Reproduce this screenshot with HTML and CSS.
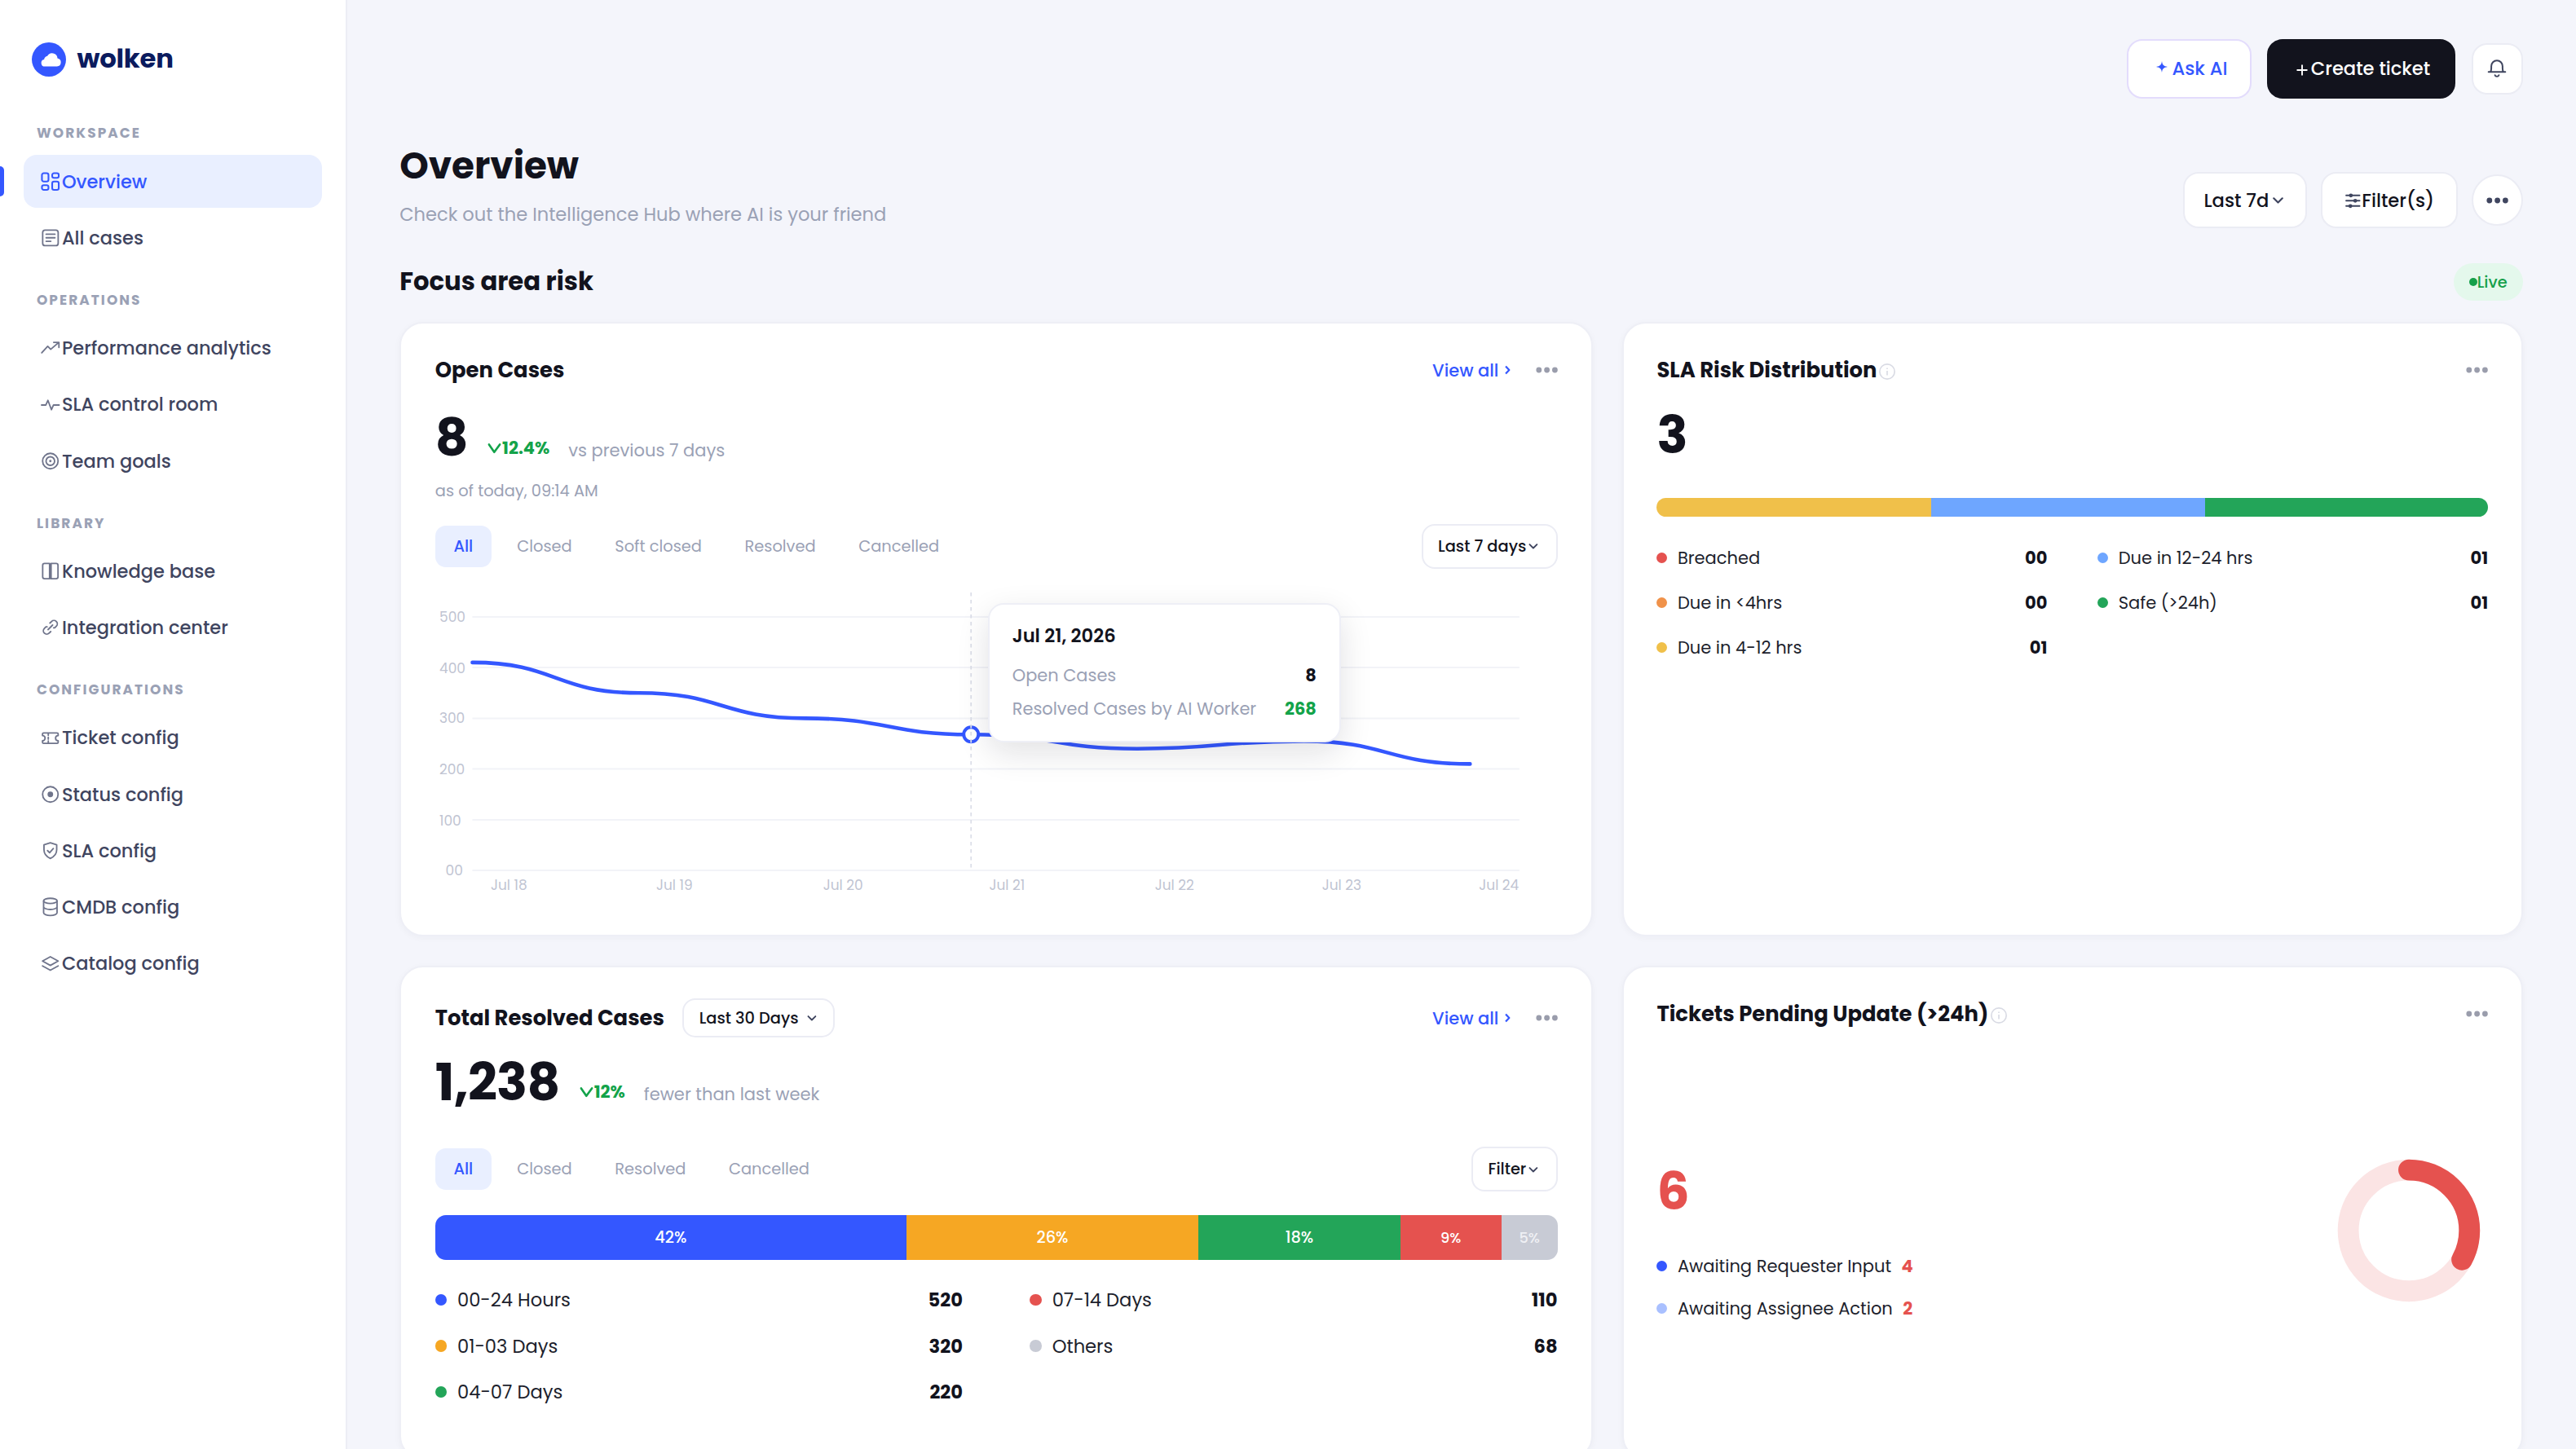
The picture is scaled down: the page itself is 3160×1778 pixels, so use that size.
FILE: index.html
```html
<!DOCTYPE html>
<html lang="en">
<head>
<meta charset="utf-8">
<title>Wolken – Overview</title>
<link rel="stylesheet" href="styles.css">
</head>
<body>
<svg class="sprite" aria-hidden="true">
  <symbol id="chevron" viewBox="0 0 24 24"><path d="M6 9.5l6 6 6-6"/></symbol>
  <symbol id="chevron-right" viewBox="0 0 24 24"><path d="M9.500 6.200l5.800 6-5.800 6"/></symbol>
  <symbol id="dots" viewBox="0 0 27 10"><circle cx="3.8" cy="5" r="3.4"/><circle cx="13.6" cy="5" r="3.4"/><circle cx="23.4" cy="5" r="3.4"/></symbol>
  <symbol id="info" viewBox="0 0 24 24"><circle cx="12" cy="12" r="10"/><path d="M12 11v6M12 7v1.6"/></symbol>
  <symbol id="down" viewBox="0 0 18 18"><path d="M2.4 4.4l6.4 9.4 6.8-9.4"/></symbol>
</svg>
<div class="app">
  <aside class="sidebar">
    <div class="brand">
      <svg class="brand-mark" viewBox="0 0 42 42"><circle cx="21" cy="21" r="21"/><path d="M16 29.6a4.4 4.4 0 0 1-.9-8.7 5.2 5.2 0 0 1 4-4.1 6.6 6.6 0 0 1 12.4 2.7 5.1 5.1 0 0 1-.6 10.1z"/></svg>
      <span class="brand-name">wolken</span>
    </div>
    <nav class="nav">
      <h2 class="nav-label">WORKSPACE</h2>
      <a class="nav-item active"><svg viewBox="0 0 24 24"><rect x="3" y="3" width="7" height="9" rx="2"/><rect x="14" y="3" width="7" height="5" rx="2"/><rect x="14" y="12" width="7" height="9" rx="2"/><rect x="3" y="16" width="7" height="5" rx="2"/></svg>Overview</a>
      <a class="nav-item"><svg viewBox="0 0 24 24"><rect x="3.8" y="3.8" width="16.6" height="16.6" rx="2.6"/><path d="M7.5 8.2h9.4M7.5 12h9.4M7.5 15.8h5"/></svg>All cases</a>
      <h2 class="nav-label">OPERATIONS</h2>
      <a class="nav-item"><svg viewBox="0 0 24 24"><path d="M2.8 17.4l6.4-7 3.2 3.2 8.4-7.2M15.6 6.2h5.6v5.4"/></svg>Performance analytics</a>
      <a class="nav-item"><svg viewBox="0 0 24 24"><path d="M2.6 12.2h4.6l2.2-5 3.8 10 2.2-5h6"/></svg>SLA control room</a>
      <a class="nav-item"><svg viewBox="0 0 24 24"><circle cx="12" cy="12" r="8.3"/><circle cx="12" cy="12" r="4.6"/><circle class="solid" cx="12" cy="12" r=".5"/></svg>Team goals</a>
      <h2 class="nav-label">LIBRARY</h2>
      <a class="nav-item"><svg viewBox="0 0 24 24"><path d="M11.2 3.8H5.8a2 2 0 0 0-2 2v12.4a2 2 0 0 0 2 2h5.4zM12.8 3.8h5.4a2 2 0 0 1 2 2v12.4a2 2 0 0 1-2 2h-5.4z"/></svg>Knowledge base</a>
      <a class="nav-item"><svg viewBox="0 0 24 24"><path d="M9.6 14.4l4.8-4.8M11.6 7.4l1.7-1.7a3.6 3.6 0 0 1 5.1 5.1l-1.7 1.7h-1.2M12.4 16.6l-1.7 1.7a3.6 3.6 0 0 1-5.1-5.1l1.7-1.7h1.2"/></svg>Integration center</a>
      <h2 class="nav-label">CONFIGURATIONS</h2>
      <a class="nav-item"><svg viewBox="0 0 24 24"><path d="M3.6 9.2V7.6a1.2 1.2 0 0 1 1.2-1.2h14.4a1.2 1.2 0 0 1 1.2 1.2v1.6a2.8 2.8 0 0 0 0 5.6v1.6a1.2 1.2 0 0 1-1.2 1.2H4.8a1.2 1.2 0 0 1-1.2-1.2v-1.6a2.8 2.8 0 0 0 0-5.6z"/><path d="M9.8 7v2M9.8 11v2M9.8 15v2"/></svg>Ticket config</a>
      <a class="nav-item"><svg viewBox="0 0 24 24"><circle cx="12" cy="12" r="8.3"/><circle class="solid" cx="12" cy="12" r="2.2"/></svg>Status config</a>
      <a class="nav-item"><svg viewBox="0 0 24 24"><path d="M12 3.6l6.8 2.2v5.4c0 4.4-2.7 7.4-6.8 9.2-4.1-1.8-6.8-4.8-6.8-9.2V5.8zM9 12l2.2 2.2 4-4.4"/></svg>SLA config</a>
      <a class="nav-item"><svg viewBox="0 0 24 24"><ellipse cx="12" cy="5.6" rx="7.2" ry="2.8"/><path d="M4.8 5.6v12.8c0 1.5 3.2 2.8 7.2 2.8s7.2-1.3 7.2-2.8V5.6M4.8 12c0 1.5 3.2 2.8 7.2 2.8s7.2-1.3 7.2-2.8"/></svg>CMDB config</a>
      <a class="nav-item"><svg viewBox="0 0 24 24"><path d="M12 4.4l8.4 4.6-8.4 4.6-8.4-4.6zM3.6 14.2l8.4 4.6 8.4-4.6"/></svg>Catalog config</a>
    </nav>
  </aside>

  <main class="main">
    <header class="topbar">
      <button class="btn btn-ask"><svg viewBox="0 0 14 14"><path d="M7 0c.7 4.6 1.8 6 7 7-5.2 1-6.3 2.4-7 7-.7-4.6-1.8-6-7-7 5.2-1 6.3-2.4 7-7z"/></svg>Ask AI</button>
      <button class="btn btn-create"><svg viewBox="0 0 14 14"><path d="M7 .5v13M.5 7h13"/></svg>Create ticket</button>
      <button class="btn btn-icon"><svg class="bell" viewBox="0 0 24 24"><path d="M1.7 16.3h20.6M4 16.3c1-1.4 1.1-2.6 1.1-4.6V9.2a6.9 6.9 0 0 1 13.8 0v2.5c0 2 .1 3.2 1.1 4.6M9.6 20.2a2.5 2.2 0 0 0 4.8 0"/></svg></button>
    </header>

    <section class="page-head">
      <div>
        <h1>Overview</h1>
        <p class="subtitle">Check out the Intelligence Hub where AI is your friend</p>
      </div>
      <div class="head-actions">
        <button class="btn btn-range">Last 7d<svg class="chev"><use href="#chevron"/></svg></button>
        <button class="btn btn-filter"><svg class="sliders" viewBox="0 0 22 22"><path d="M3 4.7h16M3 11h16M3 17.3h16"/><circle cx="8.6" cy="4.7" r="2.3"/><circle cx="13.8" cy="11" r="2.3"/><circle cx="8" cy="17.3" r="2.3"/></svg>Filter(s)</button>
        <button class="btn btn-icon btn-round"><svg class="dots"><use href="#dots"/></svg></button>
      </div>
    </section>

    <section class="section-head">
      <h2>Focus area risk</h2>
      <span class="live"><i></i>Live</span>
    </section>

    <div class="grid">
      <article class="card">
        <div class="card-head">
          <h3>Open Cases</h3>
          <a class="view-all">View all<svg><use href="#chevron-right"/></svg></a>
          <svg class="dots muted"><use href="#dots"/></svg>
        </div>
        <div class="metric metric-open">
          <span class="num">8</span>
          <span class="delta"><svg><use href="#down"/></svg>12.4%</span>
          <span class="delta-note">vs previous 7 days</span>
        </div>
        <p class="asof">as of today, 09:14 AM</p>
        <div class="tabs-row tabs-open">
          <div class="tabs"><span class="tab on">All</span><span class="tab">Closed</span><span class="tab">Soft closed</span><span class="tab">Resolved</span><span class="tab">Cancelled</span></div>
          <button class="select">Last 7 days<svg class="chev"><use href="#chevron"/></svg></button>
        </div>
        <div class="chart">
          <svg viewBox="0 0 1377 385">
            <g class="gridlines"><path d="M45.5 36.9H1330M45.5 99.1H1330M45.5 161.4H1330M45.5 223.6H1330M45.5 285.9H1330M45.5 348.1H1330"/></g>
            <g class="axis">
              <text x="5" y="43">500</text><text x="5" y="105.5">400</text><text x="5" y="167.5">300</text><text x="5" y="230">200</text><text x="5" y="292.6">100</text><text x="12.5" y="354.5">00</text>
              <text x="68" y="372">Jul 18</text><text x="271" y="372">Jul 19</text><text x="475.8" y="372">Jul 20</text><text x="679.5" y="372">Jul 21</text><text x="882.8" y="372">Jul 22</text><text x="1087.8" y="372">Jul 23</text><text x="1280.5" y="372">Jul 24</text>
            </g>
            <path class="line" d="M45.5 92.9C147.500 92.9 147.5 130.2 249.5 130.2C351.5 130.2 351.5 161.4 453.5 161.4C555.5 161.4 555.5 181.3 657.3 181.3C759 181.3 759 198.7 861 198.7C963 198.7 963 189.4 1065.5 189.4C1167.5 189.4 1167.5 217.4 1269.500 217.4"/>
            <circle class="marker" cx="657.3" cy="181.3" r="9"/>
            <path class="cursor" d="M657.3 7V348.1"/>
          </svg>
          <div class="tooltip">
            <h4>Jul 21, 2026</h4>
            <div class="tip-row"><span>Open Cases</span><b>8</b></div>
            <div class="tip-row"><span>Resolved Cases by AI Worker</span><b class="good">268</b></div>
          </div>
        </div>
      </article>

      <article class="card card-side">
        <div class="card-head">
          <h3>SLA Risk Distribution</h3><svg class="info"><use href="#info"/></svg>
          <svg class="dots muted push"><use href="#dots"/></svg>
        </div>
        <div class="metric metric-sla"><span class="num">3</span></div>
        <div class="bar bar-sla"><span class="c-yellow" style="width:33%"></span><span class="c-sky" style="width:33%"></span><span class="c-green" style="width:34%"></span></div>
        <div class="legend legend-sla">
          <div class="row"><i class="c-red"></i>Breached<b>00</b></div>
          <div class="row"><i class="c-orange"></i>Due in &lt;4hrs<b>00</b></div>
          <div class="row"><i class="c-yellow"></i>Due in 4-12 hrs<b>01</b></div>
          <div class="row"><i class="c-sky"></i>Due in 12-24 hrs<b>01</b></div>
          <div class="row"><i class="c-green"></i>Safe (&gt;24h)<b>01</b></div>
        </div>
      </article>

      <article class="card">
        <div class="card-head">
          <h3>Total Resolved Cases</h3>
          <button class="select select-sm">Last 30 Days<svg class="chev"><use href="#chevron"/></svg></button>
          <a class="view-all">View all<svg><use href="#chevron-right"/></svg></a>
          <svg class="dots muted"><use href="#dots"/></svg>
        </div>
        <div class="metric metric-resolved">
          <span class="num">1,238</span>
          <span class="delta"><svg><use href="#down"/></svg>12%</span>
          <span class="delta-note">fewer than last week</span>
        </div>
        <div class="tabs-row tabs-resolved">
          <div class="tabs"><span class="tab on">All</span><span class="tab">Closed</span><span class="tab">Resolved</span><span class="tab">Cancelled</span></div>
          <button class="select">Filter<svg class="chev"><use href="#chevron"/></svg></button>
        </div>
        <div class="bar bar-resolved"><span class="c-blue" style="width:42%">42%</span><span class="c-amber" style="width:26%">26%</span><span class="c-green" style="width:18%">18%</span><span class="c-red small" style="width:9%">9%</span><span class="c-gray small" style="width:5%">5%</span></div>
        <div class="legend legend-resolved">
          <div class="row"><i class="c-blue"></i>00-24 Hours<b>520</b></div>
          <div class="row"><i class="c-amber"></i>01-03 Days<b>320</b></div>
          <div class="row"><i class="c-green"></i>04-07 Days<b>220</b></div>
          <div class="row"><i class="c-red"></i>07-14 Days<b>110</b></div>
          <div class="row"><i class="c-gray"></i>Others<b>68</b></div>
        </div>
      </article>

      <article class="card card-side">
        <div class="card-head">
          <h3>Tickets Pending Update (&gt;24h)</h3><svg class="info"><use href="#info"/></svg>
          <svg class="dots muted push"><use href="#dots"/></svg>
        </div>
        <div class="pending">
          <div class="pending-info">
            <span class="num alert">6</span>
            <div class="pending-row"><i class="c-blue"></i>Awaiting Requester Input<b>4</b></div>
            <div class="pending-row"><i class="c-lightblue"></i>Awaiting Assignee Action<b>2</b></div>
          </div>
          <svg class="donut" viewBox="0 0 120 120"><circle class="track" cx="60" cy="60" r="46"/><circle class="value" cx="60" cy="60" r="46" pathLength="100" stroke-dasharray="33 100" transform="rotate(-90 60 60)"/></svg>
        </div>
      </article>
    </div>
  </main>
</div>
</body>
</html>
```
FILE: styles.css
```css
* { box-sizing: border-box; margin: 0; padding: 0; }
html, body { height: 100%; overflow: hidden; }
body {
  font-family: Poppins, Inter, sans-serif;
  font-size: 22.62px;
  color: #12131d;
  background: #f4f5fb;
}
button { font: inherit; color: inherit; }
i { display: block; flex: none; border-radius: 50%; }
.sprite { display: none; }
.app { display: flex; height: 1778px; overflow: hidden; }

/* Sidebar */
.sidebar {
  flex: none;
  width: 426px;
  padding: 51.5px 29px 0;
  background: #fff;
  border-right: 2px solid #ecedf5;
}
.brand { display: flex; align-items: center; gap: 13.6px; height: 42px; padding-left: 9.8px; }
.brand-mark { width: 42px; height: 42px; fill: #3457ff; }
.brand-mark path { fill: #fff; }
.brand-name { font-size: 32.3px; font-weight: 700; letter-spacing: -.2px; line-height: 40px; color: #0b1b5e; margin-top: -2px; }
.nav { padding-top: 26.6px; }
.nav-label {
  height: 26px;
  margin: 30.4px 0 13.6px 16px;
  font-size: 16.97px;
  font-weight: 700;
  line-height: 26px;
  letter-spacing: .12em;
  color: #9aa1b5;
}
.nav-item {
  position: relative;
  display: flex;
  align-items: center;
  height: 65.25px;
  padding-left: 19.4px;
  border-radius: 16px;
  font-size: 22.5px;
  font-weight: 500;
  line-height: 34px;
  color: #3f455f;
}
.nav-item + .nav-item { margin-top: 4px; }
.nav-item svg {
  width: 27.5px;
  height: 27.5px;
  fill: none;
  stroke: #6f748b;
  stroke-width: 1.6;
  stroke-linecap: round;
  stroke-linejoin: round;
}
.nav-item .solid { fill: #6f748b; }
.nav-item.active { background: #e9efff; color: #3457ff; }
.nav-item.active svg { stroke: #3457ff; stroke-width: 1.8; }
.nav-item.active::before {
  content: "";
  position: absolute;
  left: -29px;
  top: 14px;
  width: 5px;
  height: 37px;
  border-radius: 0 5px 5px 0;
  background: #3457ff;
}

/* Page header */
.main { flex: 1; min-width: 0; padding: 48px 65px 0 64.2px; }
.btn {
  display: flex;
  align-items: center;
  flex: none;
  background: #fff;
  border: 2px solid #ebecf4;
  border-radius: 19px;
  font-weight: 500;
  white-space: nowrap;
}
.topbar { display: flex; justify-content: flex-end; align-items: center; gap: 19.4px; height: 73px; }
.btn-ask, .btn-create { height: 73px; padding-bottom: 1.5px; }
.btn-ask { width: 153px; padding-left: 34.6px; gap: 5px; color: #3457ff; border-color: #e3dcfc; }
.btn-ask svg { width: 14px; height: 14px; margin-top: -4px; fill: currentColor; }
.btn-create { width: 231px; padding-left: 33.5px; gap: 4px; color: #fff; background: #12131d; border-color: #12131d; }
.btn-create svg { width: 14px; height: 14px; margin-top: 4px; fill: none; stroke: #fff; stroke-width: 1.9; }
.btn-icon { width: 63.4px; height: 63.4px; justify-content: center; }
.btn-round { border-radius: 50%; }
.bell { width: 24px; height: 24px; fill: none; stroke: #3f455f; stroke-width: 2; stroke-linecap: round; stroke-linejoin: round; }
.dots { width: 27px; height: 10px; flex: none; fill: #3f455f; }
.dots.muted { fill: #9a9dac; }

.page-head { display: flex; justify-content: space-between; align-items: flex-end; height: 112.3px; margin-top: 47px; }
h1 { font-size: 45.25px; font-weight: 700; line-height: 70px; color: #12131d; }
.subtitle { margin-top: 8px; font-size: 22.57px; line-height: 34px; color: #9aa1b5; }
.head-actions { display: flex; align-items: center; gap: 17px; }
.btn-range, .btn-filter { height: 69px; }
.btn-range { width: 152.6px; padding-left: 24px; }
.btn-range .chev { width: 21px; height: 21px; margin-left: 1px; }
.btn-filter { width: 167.5px; padding-left: 25.6px; }
.sliders { width: 22.6px; height: 22.6px; fill: #3f455f; stroke: #3f455f; stroke-width: 1.9; stroke-linecap: round; }
.sliders circle { stroke: none; }
.chev { width: 17.8px; height: 17.8px; flex: none; fill: none; stroke: #3f455f; stroke-width: 2.5; stroke-linecap: round; stroke-linejoin: round; }

.section-head { display: flex; justify-content: space-between; align-items: center; height: 46px; margin-top: 43.2px; }
.section-head h2 { font-size: 30.7px; font-weight: 700; line-height: 46px; margin-top: -1px; }
.live {
  display: flex;
  align-items: center;
  height: 46px;
  padding: 0 19.4px 0 18.6px;
  border-radius: 23px;
  background: #e4f8ec;
  color: #15a04a;
  font-size: 19.4px;
  font-weight: 500;
}
.live i { width: 10px; height: 10px; background: #15a04a; }

/* Cards */
.grid {
  display: grid;
  grid-template-columns: 1464px 1fr;
  grid-template-rows: 754.3px 606px;
  gap: 35.5px;
  margin-top: 25.5px;
}
.card {
  min-width: 0;
  padding: 38.4px 41.6px;
  background: #fff;
  border: 2px solid #eeeff6;
  border-radius: 29px;
  box-shadow: 0 2px 8px rgba(20, 22, 60, .035);
}
.card-side { padding-left: 40.8px; padding-right: 40.8px; }
.card-head { display: flex; align-items: center; min-height: 38px; }
.card-head h3 { font-size: 25.84px; font-weight: 700; line-height: 38px; margin-top: -1px; }
.view-all { display: flex; align-items: center; margin-left: auto; margin-right: 25.5px; font-size: 21px; font-weight: 500; color: #3457ff; }
.view-all svg { width: 17.8px; height: 17.8px; margin-left: 2px; fill: none; stroke: currentColor; stroke-width: 3; stroke-linejoin: round; }
.push { margin-left: auto; }
.info { width: 22px; height: 22px; margin: 3px 0 0 2px; fill: none; stroke: #d9dbe4; stroke-width: 1.8; }

.metric { display: flex; align-items: center; height: 74px; }
.metric-open { margin-top: 26.7px; }
.metric-sla { margin-top: 23.8px; }
.metric-resolved { margin-top: 17.8px; }
.num { display: block; font-size: 63px; font-weight: 700; line-height: 74px; letter-spacing: -.8px; }
.delta { display: flex; align-items: center; margin: 25px 0 0 23.2px; font-size: 21px; font-weight: 700; line-height: 28px; color: #13a34a; }
.delta svg { width: 19px; height: 18px; fill: none; stroke: currentColor; stroke-width: 2.6; stroke-linecap: round; stroke-linejoin: round; }
.delta-note { margin: 31.5px 0 0 22.9px; font-size: 21px; line-height: 28px; color: #9aa1b5; }
.asof { margin-top: 13.7px; font-size: 19.4px; line-height: 30px; color: #9aa1b5; }

.tabs-row { display: flex; justify-content: space-between; align-items: center; height: 54.4px; }
.tabs-open { margin-top: 25.4px; }
.tabs-resolved { margin-top: 42.7px; }
.tabs { display: flex; gap: 7.4px; }
.tab { padding: 0 22.6px; border-radius: 13px; font-size: 19.4px; line-height: 51.6px; color: #9aa1b5; }
.tab.on { margin-right: 1.6px; font-weight: 500; background: #e9efff; color: #3457ff; }
.select {
  display: flex;
  align-items: center;
  height: 54.4px;
  padding: 0 18.5px;
  background: #fff;
  border: 2px solid #ebecf4;
  border-radius: 16px;
  font-size: 19.4px;
  font-weight: 500;
  white-space: nowrap;
}
.select-sm { height: 47.7px; margin-left: 22.3px; padding-right: 17.6px; gap: 7.5px; }

/* Line chart */
.chart { position: relative; height: 385px; margin-top: 22.2px; }
.chart svg { display: block; width: 100%; height: 385px; }
.gridlines path { fill: none; stroke: #f2f3f8; stroke-width: 2; }
.axis text { font-size: 16.97px; fill: #c0c4d2; }
.line { fill: none; stroke: #3457ff; stroke-width: 4.6; stroke-linecap: round; }
.marker { fill: #fff; stroke: #3457ff; stroke-width: 4; }
.cursor { fill: none; stroke: #dcdee8; stroke-width: 1.8; stroke-dasharray: 4.5 4.5; }
.tooltip {
  position: absolute;
  left: 678px;
  top: 20.2px;
  width: 433px;
  height: 171px;
  padding: 22.2px 28px;
  background: #fff;
  border: 2px solid #eeeff6;
  border-radius: 19.4px;
  box-shadow: 0 13px 39px rgba(18, 19, 29, .12);
}
.tooltip h4 { font-size: 22.62px; font-weight: 600; line-height: 32px; }
.tip-row { display: flex; justify-content: space-between; height: 32px; font-size: 20.9px; line-height: 32px; color: #9aa1b5; margin-top: 8.5px; }
h4 + .tip-row { margin-top: 17.4px; }
.tip-row b { color: #12131d; }
.tip-row b.good { color: #13a34a; }

/* Stacked bars and legends */
.bar { display: flex; overflow: hidden; }
.bar span { display: block; height: 100%; text-align: center; color: #fff; }
.bar-sla { height: 23px; margin-top: 39.5px; border-radius: 12px; }
.bar-resolved { height: 55px; margin-top: 29.4px; border-radius: 13px; font-size: 19.4px; font-weight: 500; line-height: 55px; }
.bar-resolved .small { font-size: 17.78px; }
.bar-resolved .c-gray { color: #eff0f4; }
.legend { display: grid; grid-auto-flow: column; grid-template-columns: 1fr 1fr; }
.legend-sla { grid-template-rows: repeat(3, 32px); gap: 23px 62px; margin-top: 35px; font-size: 21px; }
.legend-resolved { grid-template-rows: repeat(3, 34px); gap: 22.6px 82.5px; margin-top: 31.8px; }
.row { display: flex; align-items: center; color: #1d1f2d; }
.row b { margin-left: auto; color: #12131d; }
.legend-sla i { width: 13px; height: 13px; margin-right: 12.4px; }
.legend-resolved i { width: 14.5px; height: 14.5px; margin-right: 12.7px; }
.c-blue { background: #3457ff; }
.c-lightblue { background: #a9c0ff; }
.c-sky { background: #6ea6ff; }
.c-green { background: #23a559; }
.c-yellow { background: #f0c04a; }
.c-amber { background: #f6a723; }
.c-orange { background: #f0924a; }
.c-red { background: #e5524f; }
.c-gray { background: #c8cbd5; }

/* Pending tickets */
.pending { display: flex; justify-content: space-between; align-items: flex-start; }
.pending-info { padding-top: 161.6px; }
.alert { color: #e5524f; margin-bottom: 39.2px; }
.pending-row { display: flex; align-items: center; height: 32px; margin-bottom: 19.6px; font-size: 21px; color: #1d1f2d; }
.pending-row i { width: 13px; height: 13px; margin-right: 12.4px; }
.pending-row b { margin-left: 12.5px; color: #e5524f; }
.donut { width: 193.9px; height: 193.9px; margin-top: 150.3px; fill: none; stroke-width: 16; }
.donut .track { stroke: #fbe4e4; }
.donut .value { stroke: #e5524f; stroke-linecap: round; }
```
